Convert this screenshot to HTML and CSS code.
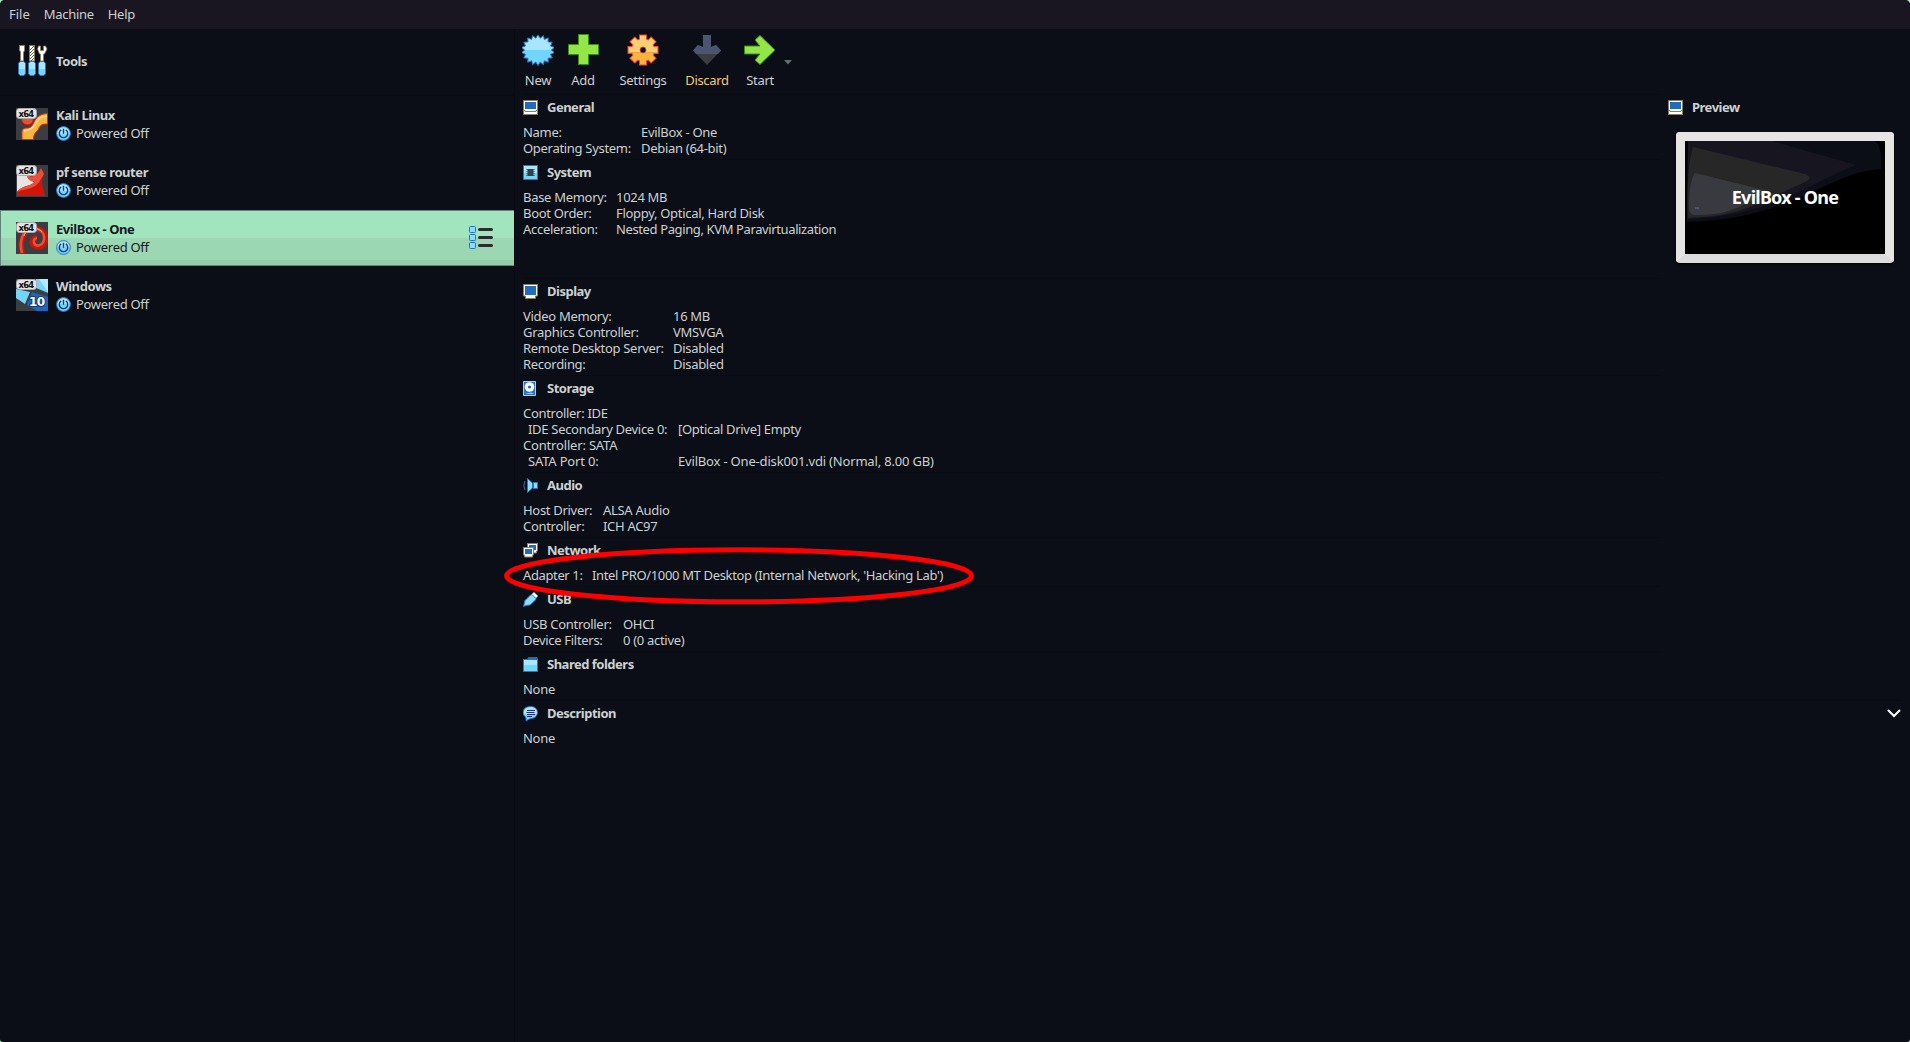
FILE: index.html
```html
<!DOCTYPE html>
<html lang="en">
<head>
<meta charset="utf-8">
<title>VirtualBox Manager</title>
<link rel="stylesheet" href="styles.css">
</head>
<body>
<svg class="defs" width="0" height="0" aria-hidden="true">
  <defs>
    <linearGradient id="blue" x1="0" y1="0" x2="0" y2="1"><stop offset=".5" stop-color="#a8e6ff"/><stop offset=".5" stop-color="#73d5fc"/></linearGradient>
    <clipPath id="cog">
      <circle cx="16" cy="16" r="11"/>
      <rect x="13" y="1.500" width="6" height="29"/><rect x="1.500" y="13" width="29" height="6"/>
      <rect x="13" y="1.500" width="6" height="29" transform="rotate(45 16 16)"/><rect x="13" y="1.500" width="6" height="29" transform="rotate(-45 16 16)"/>
    </clipPath>
    <symbol id="power" viewBox="0 0 15 15">
      <circle cx="7.5" cy="7.5" r="6.9" fill="url(#blue)" stroke="#2a74c4"/>
      <path d="M5.2 3.9a4.2 4.2 0 1 0 4.6 0M7.5 2.8v5" fill="none" stroke="#173f6e" stroke-width="1.4"/>
    </symbol>
    <symbol id="pc" viewBox="0 0 15 15">
      <path d="M.5.5h14v14H.5z" fill="#fff" stroke="#8d7b5e"/>
      <path d="M2 2h11v7H2z" fill="#216bbd"/>
      <path d="M1 10.5h1v1h11v-1h1" fill="none" stroke="#8d7b5e"/>
    </symbol>
    <symbol id="x64" viewBox="0 0 32 32">
      <rect x=".5" y=".5" width="20" height="10" rx="3" fill="#e6e5e3" stroke="#aaa"/><text class="arch" x="2.500" y="8.700">x64</text>
    </symbol>
  </defs>
</svg>

<nav class="menubar"><span>File</span><span>Machine</span><span>Help</span></nav>

<main class="window">
  <aside class="sidebar">
    <div class="tools">
      <svg class="vm-icon" viewBox="0 0 32 32">
        <path d="M3.500.5h5v5l-1 2V16h-3V7l-1-2zM13.500.5h5V16h-5z" fill="#fff" stroke="#8d7b5e"/>
        <path d="M14 5l4-4M14 8l4-4M14 11l4-4M14 14l4-4M15 16l3-3" stroke="#3a3a3a" stroke-width=".8"/>
        <path d="M22.500 1h2v4.500h3V1h2L31 4l-2.500 5h-1v7h-3V9h-1L21.500 4z" fill="#fff" stroke="#8d7b5e" stroke-width=".8"/>
        <path d="M4 16.500h4l1.500 2v10l-1.500 2H4l-1.500-2v-10zM14 16.500h4l1.500 2v10l-1.500 2h-4l-1.500-2v-10zM24 16.500h4l1.500 2v10l-1.500 2h-4l-1.500-2v-10z" fill="url(#blue)" stroke="#2a74c4"/>
      </svg>
      <b>Tools</b>
    </div>

    <div class="vm">
      <svg class="vm-icon" viewBox="0 0 32 32">
        <path d="M0 0h32v32H0z" fill="#3c3d43"/>
        <circle cx="11.500" cy="11" r="6" fill="#e8502f" stroke="#c41508"/>
        <path d="M6 31.500V24c0-3 2-4 5-4 4 0 5-2 7-6 3-6 7-8 13.500-8.500V16c-6 0-7 1-9 5-1.500 3-5 4-5 10.500z" fill="#f9b540" stroke="#d32c12"/>
        <path d="M8 23c6-1 10-3 12-8 2-5 6-7 11-7" fill="none" stroke="#fcd88c" stroke-width="2"/>
        <use href="#x64"/>
      </svg>
      <div><b>Kali Linux</b><p><svg class="power"><use href="#power"/></svg>Powered Off</p></div>
    </div>
    <div class="vm">
      <svg class="vm-icon" viewBox="0 0 32 32">
        <path d="M0 0h32v32H0z" fill="#3c3d43"/>
        <path d="M1 10l11-2 6 10-17 9z" fill="#e6e5e3"/>
        <path d="M1 27C6 20 14 22 19 17c-5-1-7-3-8-6 6 2 11-1 14-8l3 7c-3 4-2 8-1 13l2 8H1z" fill="#cf1408"/>
        <path d="M1 27C6 20 14 22 19 17c-5-1-7-3-8-6 6 2 11-1 14-8l3 6c-4 6-5 11-13 14-6 2-10 2-14 4z" fill="#e8503a"/>
        <use href="#x64"/>
      </svg>
      <div><b>pf sense router</b><p><svg class="power"><use href="#power"/></svg>Powered Off</p></div>
    </div>
    <div class="vm selected">
      <svg class="vm-icon" viewBox="0 0 32 32">
        <path d="M0 0h32v32H0z" fill="#3c3d43"/>
        <path d="M6.500 31.500C3 20 7 6.500 18 6.500c14 0 15 17 5 18.500-9 1-9-10-2-9" fill="none" stroke="#c41508" stroke-width="5.500"/>
        <path d="M6 31C3 20 6 7 18 6.500c12 0 13 15 5 17-6 1-7-7-2-7.500" fill="none" stroke="#e8503a" stroke-width="2.600"/>
        <path d="M8 14c2-7 12-11 18-4" fill="none" stroke="#f5b6aa" stroke-width=".9"/>
        <use href="#x64"/>
      </svg>
      <div><b>EvilBox - One</b><p><svg class="power"><use href="#power"/></svg>Powered Off</p></div>
      <svg class="list-icon" viewBox="0 0 25 24">
        <g fill="#8cdcff" stroke="#2571bd"><rect x=".5" y=".5" width="6" height="6" rx="1"/><rect x=".5" y="8.500" width="6" height="6" rx="1"/><rect x=".5" y="16.500" width="6" height="6" rx="1"/></g>
        <path d="M10.500 3.500h12M10.500 11.500h12M10.500 19.500h12" stroke="#2b2b2e" stroke-width="3" stroke-linecap="round"/>
      </svg>
    </div>
    <div class="vm">
      <svg class="vm-icon" viewBox="0 0 32 32">
        <path d="M0 0h32v32H0z" fill="#3c3d43"/>
        <path d="M20 0h12v14L18 8zM0 10l14 3-5 12-9-6z" fill="#73d5fc"/><path d="M23 0h9v13z" fill="#b5eafe"/>
        <path d="M16 13l16 5v14H21l-10-6z" fill="#1b68bd"/>
        <use href="#x64"/>
        <text class="ten" x="13" y="27">10</text>
      </svg>
      <div><b>Windows</b><p><svg class="power"><use href="#power"/></svg>Powered Off</p></div>
    </div>
  </aside>

  <section class="content">
    <div class="toolbar">
      <button class="new"><svg viewBox="0 0 32 32"><path fill="url(#blue)" stroke="#2a74c4" d="M16 .8l2.200 3.400L21.400 1.500l.9 3.900 4-1.500-.3 4 4.200.3-1.700 3.700 3.900 1.600-3 2.500 3 2.600-3.900 1.700 1.700 3.600-4.200.3.3 4-4-1.400-.9 3.900-3.200-2.600-2.200 3.500-2.200-3.500-3.200 2.600-.9-3.900-4 1.400.3-4-4.200-.3 1.700-3.600-3.900-1.700 3-2.600-3-2.500 3.900-1.600L1.800 8.200l4.200-.3-.3-4 4 1.500.9-3.900 3.200 2.700z"/></svg>New</button>
      <button class="add"><svg viewBox="0 0 32 32"><path d="M11.500.5h10v10h10v10h-10v10h-10v-10h-10v-10h10z" fill="#93e647" stroke="#3c8a12"/></svg>Add</button>
      <button class="settings"><svg viewBox="0 0 32 32">
        <g fill="none" stroke="#e8452a" stroke-width="2">
          <circle cx="16" cy="16" r="11"/>
          <rect x="13" y="1.500" width="6" height="29"/><rect x="1.500" y="13" width="29" height="6"/>
          <rect x="13" y="1.500" width="6" height="29" transform="rotate(45 16 16)"/><rect x="13" y="1.500" width="6" height="29" transform="rotate(-45 16 16)"/>
        </g>
        <g clip-path="url(#cog)"><path d="M0 0h32v18.500H0z" fill="#fccf74"/><path d="M0 18.500h32V32H0z" fill="#f9b540"/></g>
        <circle cx="16" cy="16" r="3" fill="#0b0e17" stroke="#e8452a" stroke-width=".8"/>
      </svg>Settings</button>
      <button class="discard"><svg viewBox="0 0 32 32"><path d="M12 1h8v12l5-2 5 5.500L16 31 2 16.500 7 11l5 2z" fill="#3c3d43"/><path d="M12 1h8v12l5-2 5 5.500L27 20H5l-3-3.500L7 11l5 2z" fill="#485573"/></svg>Discard</button>
      <button class="start"><svg viewBox="0 0 32 32"><path d="M.5 12h15.500l-5-6 5-4.500L31 16 16 30.500 11 26l5-6H.5z" fill="#93e647" stroke="#3c8a12"/></svg>Start</button>
      <svg class="arrow" viewBox="0 0 8 5"><path d="M0 0h8L4 4.500z" fill="#5d7070"/></svg>
    </div>

    <div class="panes">
      <div class="details">
        <article class="general"><h2><svg><use href="#pc"/></svg>General</h2>
          <dl><dt>Name:</dt><dd>EvilBox - One</dd><dt>Operating System:</dt><dd>Debian (64-bit)</dd></dl></article>
        <article class="system"><h2><svg viewBox="0 0 15 15"><path d="M.5.5h14v14H.5z" fill="url(#blue)" stroke="#2a74c4"/><path d="M4.500 4h6v7h-6z" fill="#3c3d43"/><path d="M4 4v7M11 4v7" stroke="#333" stroke-dasharray="1 1"/></svg>System</h2>
          <dl><dt>Base Memory:</dt><dd>1024 MB</dd><dt>Boot Order:</dt><dd>Floppy, Optical, Hard Disk</dd><dt>Acceleration:</dt><dd class="tight">Nested Paging, KVM Paravirtualization</dd></dl></article>
        <article class="display"><h2><svg viewBox="0 0 15 15"><path d="M.5.5h14v11.500h-2v2.500h-10V12h-2z" fill="#fff" stroke="#8d7b5e"/><path d="M2 2h11v9H2z" fill="#216bbd"/></svg>Display</h2>
          <dl><dt>Video Memory:</dt><dd>16 MB</dd><dt>Graphics Controller:</dt><dd>VMSVGA</dd><dt>Remote Desktop Server:</dt><dd>Disabled</dd><dt>Recording:</dt><dd>Disabled</dd></dl></article>
        <article class="storage"><h2><svg viewBox="0 0 15 15"><path d="M.5.5h12v14H.5z" fill="#2a74c4" stroke="#8cdcff"/><circle cx="6.500" cy="6" r="4.800" fill="#fff"/><circle cx="6.500" cy="6" r="1.600" fill="#216bbd"/><path d="M2 13l6-1.500 3 1.500z" fill="#8cdcff"/></svg>Storage</h2>
          <dl><dt>Controller: IDE</dt><dd></dd><dt class="sub">IDE Secondary Device 0:</dt><dd>[Optical Drive] Empty</dd><dt class="loose">Controller: SATA</dt><dd></dd><dt class="sub loose">SATA Port 0:</dt><dd class="loose">EvilBox - One-disk001.vdi (Normal, 8.00 GB)</dd></dl></article>
        <article class="audio"><h2><svg viewBox="0 0 15 15"><path d="M4.500.5L9.500 5v5l-5 4.500z" fill="#8cdcff" stroke="#2a74c4"/><path d="M10.500 4.500h4v6h-4z" fill="#8cdcff" stroke="#2a74c4"/><path d="M2 3q-2.500 4.500 0 9" fill="none" stroke="#2a74c4"/></svg>Audio</h2>
          <dl><dt>Host Driver:</dt><dd>ALSA Audio</dd><dt>Controller:</dt><dd>ICH AC97</dd></dl></article>
        <article class="network"><h2><svg viewBox="0 0 15 15"><path d="M4.500.5h10v7.500h-1v2h-9z" fill="#fff" stroke="#8d7b5e"/><path d="M6 2h7v5H6z" fill="#216bbd"/><path d="M.5 4.500h10V12h-1v2h-8v-2h-1z" fill="#fff" stroke="#8d7b5e"/><path d="M2 6h7v5H2z" fill="#216bbd"/></svg>Network</h2>
          <dl><dt class="tight">Adapter 1:</dt><dd class="snug">Intel PRO/1000 MT Desktop (Internal Network, 'Hacking Lab')</dd></dl>
          <svg class="mark" viewBox="0 0 474 60"><ellipse cx="235" cy="29.800" rx="232.500" ry="26"/></svg></article>
        <article class="usb"><h2><svg viewBox="0 0 15 15"><path d="M8.500 2.500L11 0l4 4-2.500 2.500z" fill="#fff" stroke="#8d7b5e" stroke-width=".6"/><path d="M.5 14.500l1.500-6 5.500-5.500 1.500-.5 4 4-.5 1.500L7 13l-4 .5z" fill="#8cdcff" stroke="#2a74c4"/></svg>USB</h2>
          <dl><dt>USB Controller:</dt><dd>OHCI</dd><dt>Device Filters:</dt><dd>0 (0 active)</dd></dl></article>
        <article class="shared"><h2><svg viewBox="0 0 15 15"><path d="M0 2h4l1.500-2H14l1 2v2H0z" fill="#216bbd"/><path d="M.5 2.500h14v12H.5z" fill="url(#blue)" stroke="#2a74c4"/></svg>Shared folders</h2>
          <dl><dt>None</dt></dl></article>
        <article class="description"><h2><svg viewBox="0 0 15 15"><path d="M7.500.500c9.500 0 9 12 0 12L3 14.800v-3.300C-2 8-.5.500 7.500.500z" fill="url(#blue)" stroke="#2a74c4"/><path d="M4 4.500h8M3.500 6.500h8M4 8.500h8M4 10.500h5" stroke="#20306a" stroke-width="1"/></svg>Description<svg class="chevron" viewBox="0 0 14 9"><path d="M1 1l6 6 6-6" fill="none" stroke="#fff" stroke-width="2"/></svg></h2>
          <dl><dt>None</dt></dl></article>
      </div>
      <aside class="preview">
        <h2><svg><use href="#pc"/></svg>Preview</h2>
        <div class="monitor"><svg viewBox="0 0 200 113">
          <path d="M0 0h200v113H0z" fill="#000"/>
          <path d="M3 0h186q8 2 7 28c-56 4-86 50-194 53z" fill="#0b0e17"/>
          <path d="M3 0h84l84 24C120 44 90 74 2 78z" fill="#161520"/>
          <path d="M8 6l112 27q10 4-2 9C80 58 60 76 3 77Q1 30 8 6z" fill="#272728"/>
          <path d="M10 32l73 18C50 70 40 74 8 74Q4 72 4 66 4 40 10 32z" fill="#393a3f"/>
          <path d="M10 66h4v2h-4z" fill="#485573"/>
        </svg><strong>EvilBox - One</strong></div>
      </aside>
    </div>
  </section>
</main>
</body>
</html>
```
FILE: styles.css
```css
* { box-sizing: border-box; }
html { background: #9fe6bf; }
body {
  margin: 0; height: 1042px; overflow: hidden; border-radius: 5px 5px 3px 3px;
  display: flex; flex-direction: column;
  background: #0b0e17; color: #cdd1d0;
  font: 13px/16px "Noto Sans", sans-serif;
  letter-spacing: -0.3px;
}
.defs { position: absolute; }
svg { display: block; flex: none; }
p, dl, dd, h2 { margin: 0; }
b { letter-spacing: -0.42px; }
.menubar { height: 29px; flex: none; display: flex; gap: 14px; padding: 6px 9px; background: #191622; }
.menubar span:first-child { letter-spacing: 0; }
.window { flex: 1; display: flex; min-height: 0; }

.sidebar { width: 515px; flex: none; border-right: 1px solid #090b13; }
.tools, .vm { display: flex; align-items: center; gap: 8px; padding-left: 16px; }
.tools { height: 67px; padding-bottom: 2px; border-bottom: 1px solid #090b13; }
.vm { height: 57px; padding-bottom: 1px; }
.vm b { display: block; line-height: 18px; }
.vm p { display: flex; align-items: center; gap: 5px; line-height: 18px; }
.vm-icon { width: 32px; height: 32px; }
.power { width: 15px; height: 15px; }
.arch { font: bold 8.500px "DejaVu Sans", sans-serif; letter-spacing: -.8px; fill: #111; }
.ten { font: bold 12px "DejaVu Sans", sans-serif; letter-spacing: -.5px; fill: #fff; stroke: #173f6e; stroke-width: 2px; paint-order: stroke; }
.selected {
  border: 1px solid #61817b; border-right: 0; height: 56px; margin-bottom: 1px; padding: 0 0 0 15px;
  background: linear-gradient(#a1e5be 27px, #9bd7b3 27px 49px, #94ccaa 49px); color: #191622;
}
.list-icon { width: 25px; height: 24px; margin-left: auto; margin-right: 20px; }

.content { flex: 1; min-width: 0; display: flex; flex-direction: column; }
.toolbar { height: 66px; flex: none; display: flex; padding: 5px 0 0 3px; }
button { padding: 0; border: 0; background: none; color: inherit; font: inherit; letter-spacing: inherit; display: flex; flex-direction: column; align-items: center; gap: 6px; }
button svg { width: 32px; height: 32px; }
.new { width: 40px; } .add { width: 50px; } .settings { width: 70px; } .discard { width: 58px; } .start { width: 48px; }
.discard { color: #f3c977; }
.arrow { width: 8px; height: 5px; margin-top: 26px; }

.panes { flex: 1; display: flex; }
.details { flex: 1; padding-left: 8px; }
h2 { height: 29px; display: flex; align-items: center; gap: 9px; padding-bottom: 4px; font-size: 13px; line-height: 15px; font-weight: bold; letter-spacing: -0.5px; }
h2 svg { width: 15px; height: 15px; }
article { position: relative; padding-bottom: 4px; box-shadow: 0 -1px #090b13; }
.system { height: 119px; }
dl { display: grid; grid-template-columns: var(--label, 118px) 1fr; grid-auto-rows: 16px; white-space: nowrap; }
.system { --label: 93px; } .display { --label: 150px; } .storage { --label: 155px; }
.audio { --label: 80px; } .network { --label: 69px; } .usb { --label: 100px; }
.sub { padding-left: 5px; }
.loose { letter-spacing: -0.18px; }
.snug { letter-spacing: -0.34px; }
.tight { letter-spacing: -0.38px; }
.mark { position: absolute; z-index: 1; left: -19px; top: 8px; width: 474px; height: 60px; }
.mark ellipse { fill: none; stroke: #f00; stroke-width: 5px; }
.description { margin-right: -241px; }
h2 .chevron { width: 14px; height: 9px; margin-left: auto; }

.preview { width: 250px; padding-left: 8px; }
.monitor { display: grid; place-items: center; width: 218px; height: 131px; margin: 8px 0 0 8px; border: solid #e6e5e3; border-width: 9px; border-bottom-color: #dcdcdc; border-radius: 4px; box-shadow: 0 1px 3px #000; }
.monitor > * { grid-area: 1 / 1; }
.monitor svg { width: 200px; height: 113px; }
.monitor strong { color: #fff; font-size: 18px; z-index: 1; letter-spacing: -0.75px; padding-bottom: 2px; }
```
